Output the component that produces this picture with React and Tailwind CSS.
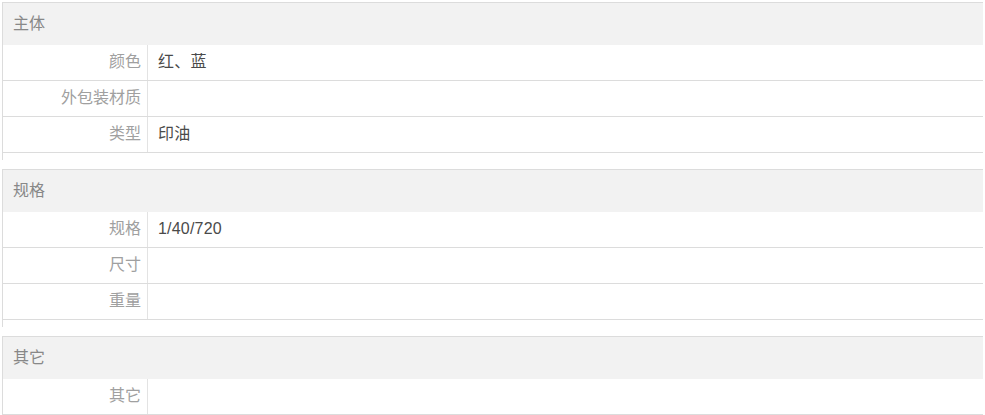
const SECTIONS = [
  {
    title: '主体',
    rows: [
      ['颜色', '红、蓝'],
      ['外包装材质', ''],
      ['类型', '印油'],
    ],
  },
  {
    title: '规格',
    rows: [
      ['规格', '1/40/720'],
      ['尺寸', ''],
      ['重量', ''],
    ],
  },
  {
    title: '其它',
    rows: [['其它', '']],
  },
]

function Section({ title, rows }) {
  return (
    <div className="border-t border-l border-[#dcdcdc] pb-[7px] mb-[9px]">
      <div className="h-[42px] bg-[#f2f2f2] flex items-center pl-[10px] text-[#888]">{title}</div>
      {rows.map(([label, value]) => (
        <div key={label} className="flex h-[36px] border-b border-[#dcdcdc]">
          <div className="w-[145px] shrink-0 border-r border-[#e3e3e3] flex items-center justify-end pr-[6px] pb-[1px] text-[#a0a0a0]">
            {label}
          </div>
          <div className="flex-1 flex items-center pl-[10px] pb-[1px] text-[#4a4a4a] tracking-[0.2px]">{value}</div>
        </div>
      ))}
    </div>
  )
}

export default function App() {
  return (
    <div
      className="w-[985px] h-[415px] overflow-hidden bg-white pt-[2px] pl-[2px] pr-[2px] text-[16px] leading-none"
      style={{ fontFamily: '"Liberation Sans", "Noto Sans CJK SC", sans-serif' }}
    >
      {SECTIONS.map((s) => (
        <Section key={s.title} {...s} />
      ))}
    </div>
  )
}
